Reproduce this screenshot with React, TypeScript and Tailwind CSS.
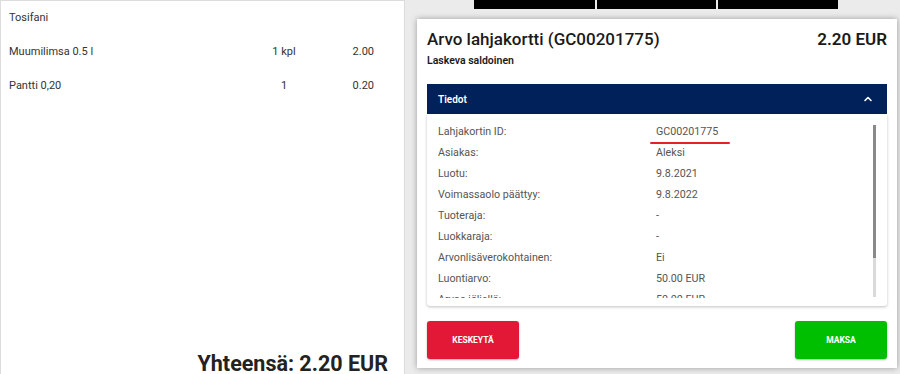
import React from "react";

interface InfoRow {
  label: string;
  value: string;
  marked?: boolean;
}

const receiptRows = [
  { name: "Muumilimsa 0.5 l", qty: "1 kpl", price: "2.00" },
  { name: "Pantti 0,20", qty: "1", price: "0.20" },
];

const infoRows: InfoRow[] = [
  { label: "Lahjakortin ID:", value: "GC00201775", marked: true },
  { label: "Asiakas:", value: "Aleksi" },
  { label: "Luotu:", value: "9.8.2021" },
  { label: "Voimassaolo päättyy:", value: "9.8.2022" },
  { label: "Tuoteraja:", value: "-" },
  { label: "Luokkaraja:", value: "-" },
  { label: "Arvonlisäverokohtainen:", value: "Ei" },
  { label: "Luontiarvo:", value: "50.00 EUR" },
  { label: "Arvoa jäljellä:", value: "50.00 EUR" },
];

// Receipt on the left side
function Receipt() {
  return (
    <div className="w-[405px] h-[377px] shrink-0 bg-white border border-b-0 border-[#dcdcdc] flex flex-col text-[#333]">
      <div className="h-[34px] pl-[8px] flex items-center text-[11px]">Tosifani</div>
      {receiptRows.map((row) => (
        <div key={row.name} className="h-[34px] pl-[8px] pr-[30px] flex items-center text-[11px]">
          <span className="flex-1">{row.name}</span>
          <span className="w-[60px] text-center">{row.qty}</span>
          <span className="w-[60px] text-right">{row.price}</span>
        </div>
      ))}
      <div className="mt-auto pr-[16px] text-right text-[21.5px] leading-[26px] font-bold text-[#222]">
        Yhteensä: 2.20 EUR
      </div>
    </div>
  );
}

function ChevronUp() {
  return (
    <svg width="10" height="10" viewBox="0 0 10 10" fill="none">
      <polyline points="2,6.5 5,3.5 8,6.5" stroke="white" strokeWidth="1.6" strokeLinecap="round" strokeLinejoin="round" />
    </svg>
  );
}

// Gift card dialog
function GiftCardDialog() {
  return (
    <div className="ml-[12px] mt-[10px] w-[480px] h-[349px] bg-white shadow-[0_0_6px_rgba(0,0,0,0.35)] px-[10px] pt-[10px] pb-[9px] flex flex-col">
      <div className="h-[22px] flex items-center justify-between text-[17px] font-medium text-[#1a1a1a]">
        <span>Arvo lahjakortti (GC00201775)</span>
        <span className="font-semibold">2.20 EUR</span>
      </div>
      <div className="mt-[3px] h-[14px] flex items-center text-[10.5px] font-semibold text-[#1a1a1a]">
        Laskeva saldoinen
      </div>

      <div className="mt-[16px] h-[30px] bg-[#002159] pl-[11px] pr-[14px] flex items-center justify-between">
        <span className="text-[10px] font-semibold text-white">Tiedot</span>
        <ChevronUp />
      </div>
      <div className="h-[192px] flex shadow-[0_1px_3px_rgba(0,0,0,0.25)] rounded-b-[3px]">
        <div className="flex-1 pl-[11px] pt-[8px]">
          <div className="h-[176px] overflow-hidden">
            {infoRows.map((row) => (
              <div key={row.label} className="h-[20.9px] flex items-center text-[10.7px] text-[#555]">
                <span className="w-[218px]">{row.label}</span>
                <span className="relative">
                  {row.value}
                  {row.marked && (
                    <span className="absolute left-[-6px] right-[-12px] bottom-[-4px] h-[2px] bg-[#e4202a] rounded-full" />
                  )}
                </span>
              </div>
            ))}
          </div>
        </div>
        <div className="w-[3px] mt-[11px] mr-[11px] h-[172px] bg-[#dadada] flex flex-col">
          <div className="h-[133px] bg-[#8a8a8a]" />
        </div>
      </div>

      <div className="mt-[15px] h-[38px] flex justify-between">
        <button className="w-[92px] h-[38px] rounded-[3px] bg-[#e31837] text-white text-[8.5px] font-bold shadow-[0_1px_2px_rgba(0,0,0,0.3)]">
          KESKEYTÄ
        </button>
        <button className="w-[92px] h-[38px] rounded-[3px] bg-[#00bf00] text-white text-[8.5px] font-bold shadow-[0_1px_2px_rgba(0,0,0,0.3)]">
          MAKSA
        </button>
      </div>
    </div>
  );
}

export default function App() {
  return (
    <div className="w-[900px] h-[374px] overflow-hidden bg-[#ebebeb] flex font-['Roboto',sans-serif]">
      <Receipt />
      <div className="flex-1 flex flex-col">
        <div className="h-[9px] pl-[69px] flex gap-[2px]">
          <div className="w-[121px] bg-black" />
          <div className="w-[119px] bg-black" />
          <div className="w-[120px] bg-black" />
        </div>
        <GiftCardDialog />
      </div>
    </div>
  );
}
